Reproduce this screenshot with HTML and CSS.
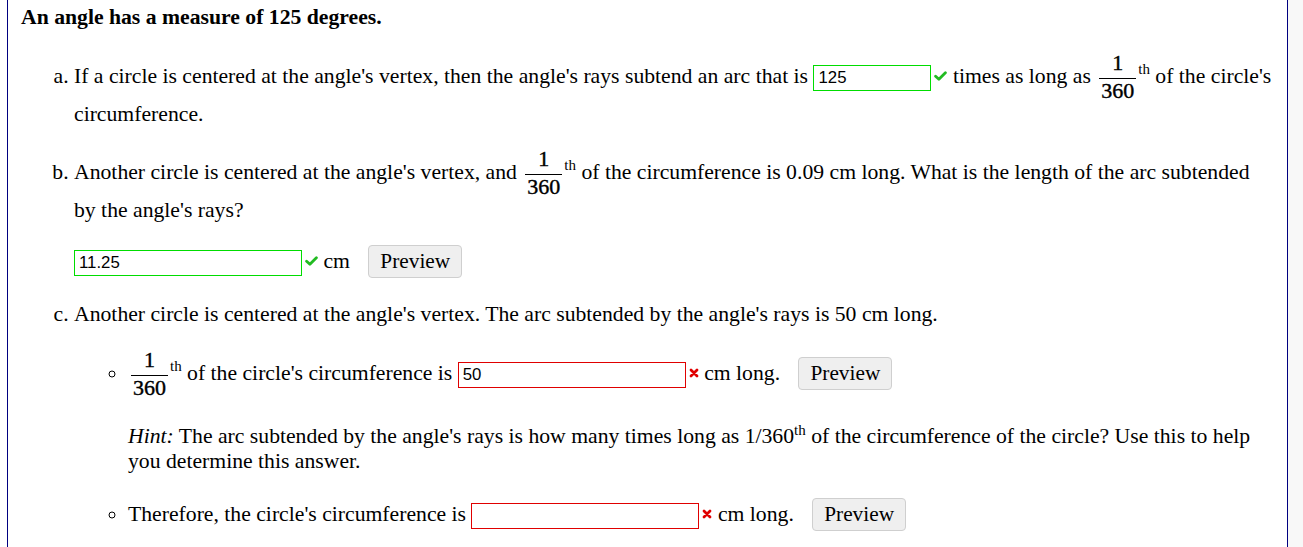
FILE: index.html
```html
<!DOCTYPE html>
<html>
<head>
<meta charset="utf-8">
<link rel="stylesheet" href="styles.css">
</head>
<body>
<div class="page">
  <main class="problem">
    <p class="title">An angle has a measure of 125 degrees.</p>
    <ol class="parts">
      <li class="part">
        <p class="line">If a circle is centered at the angle's vertex, then the angle's rays subtend an arc that is <input class="ans ok short" type="text" value="125"><svg class="mark" width="13" height="10" viewBox="0 0 13 10"><path d="M1.6 5.2 L4.9 8.3 L11.4 1.7" fill="none" stroke="#22bb22" stroke-width="2.8" stroke-linecap="round" stroke-linejoin="round"/></svg> times as long as <span class="frac"><span class="num">1</span><span class="den">360</span></span><sup class="th">th</sup> of the circle's circumference.</p>
      </li>
      <li class="part">
        <p class="line">Another circle is centered at the angle's vertex, and <span class="frac"><span class="num">1</span><span class="den">360</span></span><sup class="th">th</sup> of the circumference is 0.09 cm long. What is the length of the arc subtended by the angle's rays?</p>
        <p class="answer-row"><input class="ans ok" type="text" value="11.25"><svg class="mark" width="13" height="10" viewBox="0 0 13 10"><path d="M1.6 5.2 L4.9 8.3 L11.4 1.7" fill="none" stroke="#22bb22" stroke-width="2.8" stroke-linecap="round" stroke-linejoin="round"/></svg> cm <button class="preview" type="button">Preview</button></p>
      </li>
      <li class="part part-c">
        <p class="line">Another circle is centered at the angle's vertex. The arc subtended by the angle's rays is 50 cm long.</p>
        <ul class="steps">
          <li class="step">
            <p class="line"><span class="frac"><span class="num">1</span><span class="den">360</span></span><sup class="th">th</sup> of the circle's circumference is <input class="ans bad" type="text" value="50"><svg class="mark cross" width="10" height="10" viewBox="0 0 10 10"><path d="M2 2 L8 8 M8 2 L2 8" fill="none" stroke="#e00000" stroke-width="2.8" stroke-linecap="round"/></svg> cm long. <button class="preview" type="button">Preview</button></p>
            <p class="hint"><i>Hint:</i> The arc subtended by the angle's rays is how many times long as 1/360<sup class="th-small">th</sup> of the circumference of the circle? Use this to help you determine this answer.</p>
          </li>
          <li class="step">
            <p class="line">Therefore, the circle's circumference is <input class="ans bad" type="text" value=""><svg class="mark cross" width="10" height="10" viewBox="0 0 10 10"><path d="M2 2 L8 8 M8 2 L2 8" fill="none" stroke="#e00000" stroke-width="2.8" stroke-linecap="round"/></svg> cm long. <button class="preview" type="button">Preview</button></p>
          </li>
        </ul>
      </li>
    </ol>
  </main>
  <div class="gutter"></div>
</div>
</body>
</html>
```
FILE: styles.css
```css
html, body {
  margin: 0;
  padding: 0;
  background: #ffffff;
}

body {
  font-family: "Liberation Serif", "Times New Roman", serif;
  font-size: 21.7px;
  color: #000;
}

.page {
  display: flex;
  height: 547px;
  overflow: hidden;
}

.problem {
  flex: 0 0 1281px;
  box-sizing: border-box;
  margin-left: 7px;
  padding: 5px 13px 0 13px;
  border-left: 1px solid #000080;
  border-right: 1px solid #000080;
}

.gutter {
  flex: 1 1 auto;
  background: #f8f8f8;
}

.title {
  margin: 0;
  font-weight: bold;
}

.parts {
  margin: 22px 0 0 0;
  padding-left: 53px;
  list-style: lower-alpha;
}

.part + .part {
  margin-top: 21px;
}

.part + .part-c {
  margin-top: 24px;
}

.line {
  margin: 0;
}

.frac {
  display: inline-flex;
  flex-direction: column;
  align-items: stretch;
  text-align: center;
  line-height: 1;
  font-size: 22px;
  vertical-align: 13px;
  margin: 0 2px 0 3px;
  -webkit-text-stroke: 0.4px #000;
}

.frac .num {
  padding: 0 2px 3.5px 2px;
  border-bottom: 1.3px solid #000;
}

.frac .den {
  padding: 1.5px 2px 0 2px;
}

.th {
  font-size: 15px;
  vertical-align: 9px;
  line-height: 0;
}

.th-small {
  font-size: 15px;
  vertical-align: 8px;
  line-height: 0;
}

.ans {
  box-sizing: border-box;
  width: 228px;
  height: 26px;
  margin: 0;
  padding: 2px 4px 2px 4px;
  font-family: "Liberation Sans", Arial, sans-serif;
  font-size: 16.8px;
  color: #000;
  background: #fff;
  border: 1px solid #00dd00;
  border-radius: 0;
  outline: none;
  vertical-align: baseline;
}

.ans.short {
  width: 118px;
}

.ans.bad {
  border-color: #e00000;
}

.mark {
  margin-left: 3px;
  vertical-align: 2px;
}

.cross {
  margin-left: 3px;
  vertical-align: 2px;
}

.answer-row {
  margin: 22px 0 0 0;
}

.preview {
  margin-left: 13px;
  padding: 3px 11px;
  font-family: "Liberation Serif", "Times New Roman", serif;
  font-size: 21.3px;
  color: #000;
  background: #efefef;
  border: 1px solid #cfcfcf;
  border-radius: 4px;
}

.steps {
  margin: 22px 0 0 0;
  padding-left: 54px;
  list-style: circle;
}

.hint {
  margin: 25px 0 0 0;
}

.step + .step {
  margin-top: 24px;
}
```
